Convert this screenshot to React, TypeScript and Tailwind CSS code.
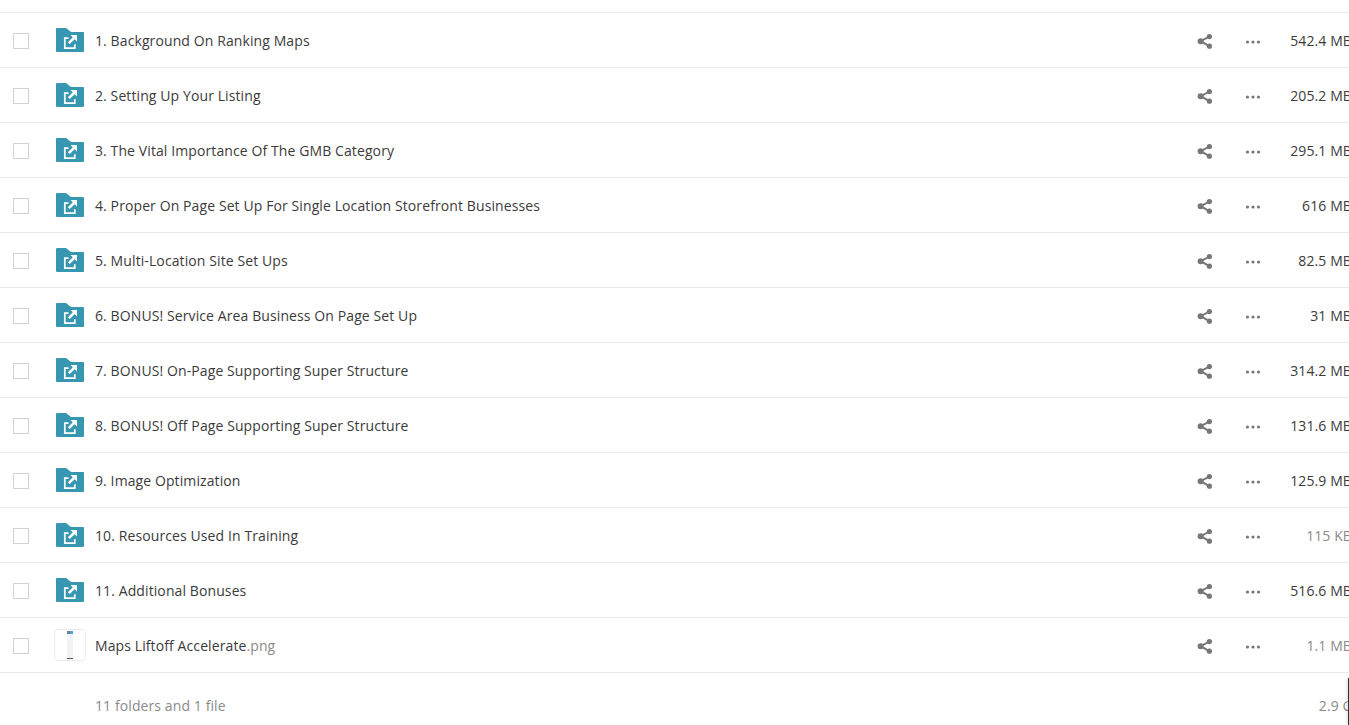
import React from 'react';

type Item = { name: string; ext?: string; size: string; muted?: boolean };

const items: Item[] = [
  { name: '1. Background On Ranking Maps', size: '542.4 MB' },
  { name: '2. Setting Up Your Listing', size: '205.2 MB' },
  { name: '3. The Vital Importance Of The GMB Category', size: '295.1 MB' },
  { name: '4. Proper On Page Set Up For Single Location Storefront Businesses', size: '616 MB' },
  { name: '5. Multi-Location Site Set Ups', size: '82.5 MB' },
  { name: '6. BONUS! Service Area Business On Page Set Up', size: '31 MB' },
  { name: '7. BONUS! On-Page Supporting Super Structure', size: '314.2 MB' },
  { name: '8. BONUS! Off Page Supporting Super Structure', size: '131.6 MB' },
  { name: '9. Image Optimization', size: '125.9 MB' },
  { name: '10. Resources Used In Training', size: '115 KB', muted: true },
  { name: '11. Additional Bonuses', size: '516.6 MB' },
  { name: 'Maps Liftoff Accelerate', ext: '.png', size: '1.1 MB', muted: true },
];

function SharedFolder() {
  return (
    <svg width="28" height="24" viewBox="0 0 28 24" className="shrink-0">
      <path d="M0 1a1 1 0 0 1 1-1h9l5 4h12a1 1 0 0 1 1 1v18a1 1 0 0 1-1 1H1a1 1 0 0 1-1-1z" fill="#3797b1" />
      <path d="M12.500 10.200H8.800v10h10v-4" fill="none" stroke="#fff" strokeWidth="1.7" />
      <path d="M14.500 7H21v6.500z" fill="#fff" />
      <path d="M18.500 9.500 12.800 15.200" fill="none" stroke="#fff" strokeWidth="2.6" />
    </svg>
  );
}

function FileThumb() {
  return (
    <div className="flex h-8 w-8 shrink-0 justify-center rounded border border-[#ececec] bg-white py-px">
      <div className="flex h-full w-1.5 flex-col justify-between bg-[#f1f4f6]">
        <div className="flex h-[3px] justify-end bg-[#6f8296]">
          <div className="w-[3px] bg-[#4ba3dc]" />
        </div>
        <div className="h-px bg-[#555555]" />
      </div>
    </div>
  );
}

function ShareIcon() {
  return (
    <svg width="16" height="15" viewBox="0 0 16 15" fill="#777777" stroke="#777777" className="mt-[2px]">
      <circle cx="3.600" cy="7.200" r="3" stroke="none" />
      <circle cx="12.400" cy="2.600" r="2.600" stroke="none" />
      <circle cx="12.400" cy="12.200" r="2.600" stroke="none" />
      <path d="M12.400 2.600 3.600 7.200l8.800 5" fill="none" strokeWidth="2" />
    </svg>
  );
}

function DotsIcon() {
  return (
    <svg width="16" height="4" viewBox="0 0 16 4" fill="#777777" className="mt-[3px] block">
      <circle cx="2.500" cy="2" r="1.600" />
      <circle cx="8" cy="2" r="1.600" />
      <circle cx="13.500" cy="2" r="1.600" />
    </svg>
  );
}

function Row({ item, isFile }: { item: Item; isFile: boolean }) {
  return (
    <div className="flex h-[55px] items-center border-b border-[#ebebeb] pl-[13px]">
      <div className="mt-[2px] h-4 w-4 shrink-0 border border-[#d2d2d2] bg-white" />
      <div className={isFile ? 'ml-[25px] w-[41px] shrink-0' : 'ml-[27px] w-[39px] shrink-0'}>
        {isFile ? <FileThumb /> : <SharedFolder />}
      </div>
      <div className="min-w-0 flex-1 truncate text-[#3b3b3b]">
        {item.name}
        {item.ext && <span className="text-[#8a8a8a]">{item.ext}</span>}
      </div>
      <div className="flex w-[155px] shrink-0 items-center">
        <ShareIcon />
        <div className="ml-[32px]">
          <DotsIcon />
        </div>
        <div className={`ml-auto whitespace-nowrap ${item.muted ? 'text-[#8a8a8a]' : 'text-[#3b3b3b]'}`}>{item.size}</div>
      </div>
    </div>
  );
}

export default function App() {
  return (
    <div className="relative h-[725px] w-[1349px] overflow-hidden bg-white font-['Open_Sans',sans-serif] text-[14px] tracking-[0.1px]">
      <div className="mt-3 w-[1352px] border-t border-[#ebebeb]">
        {items.map((item, i) => (
          <Row key={item.name} item={item} isFile={i === items.length - 1} />
        ))}
        <div className="flex h-[65px] w-[1362px] items-center justify-between pl-[95px] text-[#8a8a8a]">
          <span>11 folders and 1 file</span>
          <span>2.9 GB</span>
        </div>
      </div>
      {/* тёмный край чужого окна справа снизу */}
      <div className="absolute right-0 top-[678px] h-[47px] w-px bg-[#333333] shadow-[-1px_0_3px_rgba(0,0,0,0.25)]" />
    </div>
  );
}
